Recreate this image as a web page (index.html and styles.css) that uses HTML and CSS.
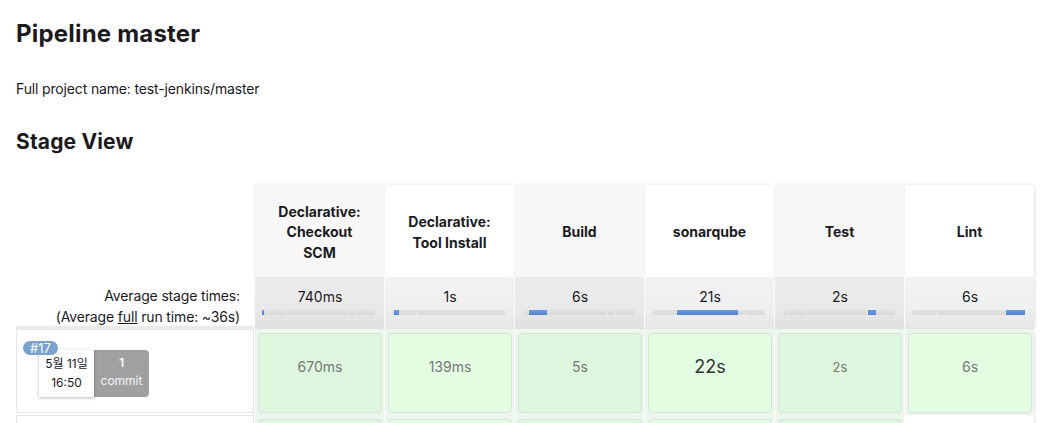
FILE: index.html
```html
<!DOCTYPE html>
<html lang="en">
<head>
<meta charset="utf-8">
<title>Pipeline master</title>
<link rel="stylesheet" href="styles.css">
</head>
<body>
<main class="page">
  <h1 class="title">Pipeline master</h1>
  <p class="project">Full project name: test-jenkins/master</p>
  <h2 class="section">Stage View</h2>

  <div class="stage-view">
    <div class="row head-row">
      <div class="corner"></div>
      <div class="stage-head odd">Declarative:<br>Checkout<br>SCM</div>
      <div class="stage-head even">Declarative:<br>Tool Install</div>
      <div class="stage-head odd">Build</div>
      <div class="stage-head even">sonarqube</div>
      <div class="stage-head odd">Test</div>
      <div class="stage-head even last">Lint</div>
    </div>

    <div class="row avg-row">
      <div class="avg-label">
        <div>Average stage times:</div>
        <div>(Average <u>full</u> run time: ~36s)</div>
      </div>
      <div class="avg odd"><div class="avg-time">740ms</div>
        <div class="bar">
          <span class="seg cur" style="flex-basis:2px"></span><span class="seg" style="flex-basis:5px"></span><span class="seg" style="flex-basis:18px"></span><span class="seg" style="flex-basis:61px"></span><span class="seg" style="flex-basis:8px"></span><span class="seg" style="flex-basis:19px"></span>
        </div>
      </div>
      <div class="avg even"><div class="avg-time">1s</div>
        <div class="bar">
          <span class="seg" style="flex-basis:2px"></span><span class="seg cur" style="flex-basis:5px"></span><span class="seg" style="flex-basis:18px"></span><span class="seg" style="flex-basis:61px"></span><span class="seg" style="flex-basis:8px"></span><span class="seg" style="flex-basis:19px"></span>
        </div>
      </div>
      <div class="avg odd"><div class="avg-time">6s</div>
        <div class="bar">
          <span class="seg" style="flex-basis:2px"></span><span class="seg" style="flex-basis:5px"></span><span class="seg cur" style="flex-basis:18px"></span><span class="seg" style="flex-basis:61px"></span><span class="seg" style="flex-basis:8px"></span><span class="seg" style="flex-basis:19px"></span>
        </div>
      </div>
      <div class="avg even"><div class="avg-time">21s</div>
        <div class="bar">
          <span class="seg" style="flex-basis:2px"></span><span class="seg" style="flex-basis:5px"></span><span class="seg" style="flex-basis:18px"></span><span class="seg cur" style="flex-basis:61px"></span><span class="seg" style="flex-basis:8px"></span><span class="seg" style="flex-basis:19px"></span>
        </div>
      </div>
      <div class="avg odd"><div class="avg-time">2s</div>
        <div class="bar">
          <span class="seg" style="flex-basis:2px"></span><span class="seg" style="flex-basis:5px"></span><span class="seg" style="flex-basis:18px"></span><span class="seg" style="flex-basis:61px"></span><span class="seg cur" style="flex-basis:8px"></span><span class="seg" style="flex-basis:19px"></span>
        </div>
      </div>
      <div class="avg even last"><div class="avg-time">6s</div>
        <div class="bar">
          <span class="seg" style="flex-basis:2px"></span><span class="seg" style="flex-basis:5px"></span><span class="seg" style="flex-basis:18px"></span><span class="seg" style="flex-basis:61px"></span><span class="seg" style="flex-basis:8px"></span><span class="seg cur" style="flex-basis:19px"></span>
        </div>
      </div>
    </div>

    <div class="row run-row">
      <div class="run-info">
        <span class="badge">#17</span>
        <div class="run-meta">
          <div class="run-date"><div>5월 11일</div><div>16:50</div></div>
          <div class="run-commit"><div class="count">1</div><div>commit</div></div>
        </div>
      </div>
      <div class="stage-cell odd"><div class="box">670ms</div></div>
      <div class="stage-cell even"><div class="box">139ms</div></div>
      <div class="stage-cell odd"><div class="box">5s</div></div>
      <div class="stage-cell even"><div class="box long">22s</div></div>
      <div class="stage-cell odd"><div class="box small">2s</div></div>
      <div class="stage-cell even last"><div class="box">6s</div></div>
    </div>

    <div class="row run-row">
      <div class="run-info"></div>
      <div class="stage-cell odd"><div class="box"></div></div>
      <div class="stage-cell even"><div class="box"></div></div>
      <div class="stage-cell odd"><div class="box"></div></div>
      <div class="stage-cell even"><div class="box"></div></div>
      <div class="stage-cell odd"><div class="box"></div></div>
      <div class="stage-cell empty last"></div>
    </div>
  </div>
</main>
</body>
</html>
```

FILE: styles.css
```css
html, body {
  margin: 0;
  padding: 0;
  background: #fff;
}

body {
  font-family: "Inter", "Noto Sans CJK KR", "Liberation Sans", sans-serif;
  color: #1b1b1f;
  overflow: hidden;
}

.page {
  padding: 0 16px;
}

.title {
  margin: 19px 0 0;
  font-size: 24px;
  line-height: 29px;
  font-weight: 700;
  letter-spacing: 0.2px;
}

.project {
  margin: 31px 0 0;
  font-size: 14px;
  line-height: 20px;
  letter-spacing: -0.15px;
}

.section {
  margin: 31px 0 0;
  font-size: 21px;
  line-height: 24px;
  font-weight: 700;
  letter-spacing: 0.15px;
}

.stage-view {
  margin-top: 31px;
}

.row {
  display: grid;
  grid-template-columns: 238px repeat(6, 130px);
}

/* header */
.head-row {
  height: 92px;
}

.stage-head {
  display: flex;
  align-items: center;
  justify-content: center;
  box-sizing: border-box;
  padding-top: 3px;
  text-align: center;
  font-size: 14px;
  line-height: 20.5px;
  font-weight: 700;
  color: #1b1b1f;
  border-left: 1px solid #f3f3f3;
  box-shadow: 0 -2px 3px -1px rgba(0, 0, 0, 0.07);
}

.odd.stage-head { background: #f7f7f7; }
.even.stage-head { background: #ffffff; }

.last {
  box-shadow: 2px 0 3px -1px rgba(0, 0, 0, 0.12);
}
.stage-head.last {
  box-shadow: 0 -2px 3px -1px rgba(0, 0, 0, 0.07), 2px 0 3px -1px rgba(0, 0, 0, 0.12);
}

/* averages */
.avg-row {
  height: 52px;
}

.avg-label {
  text-align: right;
  padding: 8px 14px 0 0;
  font-size: 14px;
  line-height: 21px;
  letter-spacing: -0.15px;
  color: #1b1b1f;
  background: linear-gradient(to bottom, #fff 0, #fff 48px, #e6e6e6 50px, #f0f0f0 52px);
}

.avg {
  border-left: 1px solid #fbfbfb;
  padding: 10px 6px 0 7px;
}

.avg.odd { background: linear-gradient(to bottom, #ebebeb 0, #e9e9e9 60%, #e0e0e0 100%); }
.avg.even { background: linear-gradient(to bottom, #f2f2f2 0, #efefef 60%, #e5e5e5 100%); }

.avg-time {
  text-align: center;
  font-size: 14px;
  line-height: 20px;
  color: #1b1b1f;
}

.bar {
  display: flex;
  width: 113px;
  height: 5px;
  margin-top: 3px;
}

.seg {
  flex-grow: 0;
  flex-shrink: 0;
  height: 5px;
  background: linear-gradient(to bottom, #e2e2e2, #d8d8d8);
  box-shadow: inset -1px 0 0 #e9e9e9;
}

.seg:last-child {
  box-shadow: none;
}

.seg.cur {
  background: linear-gradient(to bottom, #6d9be0, #4f82cf);
  box-shadow: none;
}

/* runs */
.run-row {
  height: 86px;
}

.run-info {
  position: relative;
  margin-bottom: 2px;
  border: 1px solid #e6e6e6;
  background: #fff;
}

.badge {
  position: absolute;
  left: 6px;
  top: 11px;
  z-index: 2;
  padding: 0 7px;
  height: 14px;
  line-height: 14px;
  border-radius: 7px;
  background: #7aa2cf;
  color: #fff;
  font-size: 13px;
}

.run-meta {
  display: flex;
  margin: 20px 0 0 22px;
}

.run-date,
.run-commit {
  width: 55px;
  height: 47px;
  display: flex;
  flex-direction: column;
  align-items: center;
  padding-top: 4px;
  box-sizing: border-box;
  font-size: 12px;
  line-height: 19px;
}

.run-date {
  background: #fff;
  color: #1b1b1f;
  box-shadow: 0 1px 3px rgba(0, 0, 0, 0.28);
  position: relative;
  z-index: 1;
}

.run-commit {
  background: #a0a0a0;
  color: #f4f4f4;
  border-radius: 0 4px 4px 0;
  line-height: 18px;
}

.run-commit .count {
  font-weight: 700;
}

.stage-cell {
  background: #eef4ee;
  border-left: 1px solid #f8fbf8;
  padding: 4px 2px 2px 3px;
}

.stage-cell.empty {
  background: #fff;
}

.box {
  height: 80px;
  box-sizing: border-box;
  border: 1px solid #d4e4d4;
  border-radius: 4px;
  padding-top: 23px;
  text-align: center;
  font-size: 14px;
  line-height: 20px;
  color: #777;
}

.odd .box { background: #ddf6dd; }
.even .box { background: #e3fde3; }

.box.long {
  font-size: 18px;
  color: #333;
}

.box.small {
  font-size: 13px;
}
```
